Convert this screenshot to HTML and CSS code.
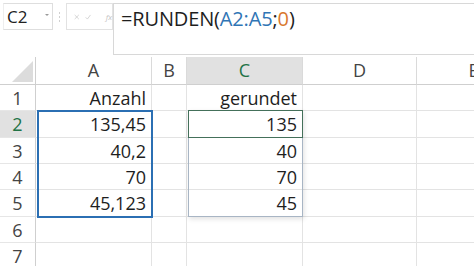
FILE: index.html
```html
<!DOCTYPE html>
<html lang="de">
<head>
<meta charset="utf-8">
<title>RUNDEN</title>
<link rel="stylesheet" href="styles.css">
</head>
<body>
<div class="sheet">
  <div class="bar">
    <div class="namebox"><span class="name">C2</span><span class="caret"></span></div>
    <div class="grip"><i></i><i></i><i></i></div>
    <div class="fbtns">
      <svg width="8" height="8" viewBox="0 0 8 8"><path d="M1 1L7 7M7 1L1 7" stroke="#c8c8c8" stroke-width="1.1" fill="none"/></svg>
      <svg width="9" height="8" viewBox="0 0 9 8"><path d="M1 4.5L3.5 7L8 1" stroke="#c8c8c8" stroke-width="1.1" fill="none"/></svg>
      <span class="fx">fx</span>
    </div>
    <div class="formula">=RUNDEN(<span class="ref">A2:A5</span>;<span class="num">0</span>)</div>
  </div>
  <div class="grid">
    <div class="corner"><span class="tri"></span></div>
    <div class="colh">A</div>
    <div class="colh">B</div>
    <div class="colh sel">C</div>
    <div class="colh">D</div>
    <div class="colh">E</div>

    <div class="rowh">1</div>
    <div class="cell">Anzahl</div><div class="cell"></div><div class="cell">gerundet</div><div class="cell"></div><div class="cell"></div>

    <div class="rowh sel">2</div>
    <div class="cell">135,45</div><div class="cell"></div><div class="cell">135</div><div class="cell"></div><div class="cell"></div>

    <div class="rowh">3</div>
    <div class="cell">40,2</div><div class="cell"></div><div class="cell">40</div><div class="cell"></div><div class="cell"></div>

    <div class="rowh">4</div>
    <div class="cell">70</div><div class="cell"></div><div class="cell">70</div><div class="cell"></div><div class="cell"></div>

    <div class="rowh">5</div>
    <div class="cell">45,123</div><div class="cell"></div><div class="cell">45</div><div class="cell"></div><div class="cell"></div>

    <div class="rowh">6</div>
    <div class="cell"></div><div class="cell"></div><div class="cell"></div><div class="cell"></div><div class="cell"></div>

    <div class="rowh">7</div>
    <div class="cell"></div><div class="cell"></div><div class="cell"></div><div class="cell"></div><div class="cell"></div>

    <div class="range-a"></div>
    <div class="spill-c"></div>
    <div class="active"></div>
  </div>
</div>
</body>
</html>
```
FILE: styles.css
```css
* { box-sizing: border-box; }
html, body { margin: 0; padding: 0; background: #fff; }
body {
  width: 474px;
  height: 266px;
  overflow: hidden;
  font-family: "Open Sans", "Noto Sans", sans-serif;
  color: #222;
}
.sheet { width: 474px; overflow: hidden; }

.bar {
  display: flex;
  align-items: flex-start;
  height: 57px;
  padding-top: 3px;
}
.namebox {
  margin-left: 3px;
  width: 50px;
  height: 27px;
  border: 1px solid #dedede;
  border-left-color: #eee;
  display: flex;
  align-items: center;
  justify-content: space-between;
  padding: 0 3px 0 3px;
  font-size: 17px;
  color: #222;
}
.name { line-height: 25px; }
.caret {
  width: 0; height: 0;
  border-left: 2px solid transparent;
  border-right: 2px solid transparent;
  border-top: 2px solid #9a9a9a;
  margin-bottom: 3px;
}
.grip {
  width: 13px;
  height: 27px;
  display: flex;
  flex-direction: column;
  align-items: center;
  justify-content: center;
  gap: 2px;
}
.grip i { display: block; width: 1px; height: 2px; background: #d0d0d0; }
.fbtns {
  width: 47px;
  height: 27px;
  border: 1px solid #e2e2e2;
  display: flex;
  align-items: center;
  gap: 6px;
  padding-left: 7px;
}
.fx { font-size: 8px; color: #c4c4c4; font-style: italic; margin-left: 8px; }
.formula {
  flex: 1;
  height: 52px;
  border: 1px solid #d8d8d8;
  border-right: none;
  padding: 3px 0 0 7px;
  font-size: 20px;
  line-height: 24px;
  letter-spacing: -0.15px;
  color: #1e1e1e;
  white-space: nowrap;
}
.ref { color: #2f75b5; }
.num { color: #d9782e; }

.grid {
  position: relative;
  display: grid;
  grid-template-columns: 36px 116px 35px 116px 114px 114px;
  grid-template-rows: 28px repeat(7, 26.34px);
  font-size: 18px;
}
.corner {
  position: relative;
  border-right: 1px solid #cfcfcf;
  border-bottom: 1px solid #cfcfcf;
}
.tri {
  position: absolute;
  right: 2px;
  bottom: 2px;
  width: 21px;
  height: 21px;
  background: #dcdcdc;
  clip-path: polygon(100% 0, 100% 100%, 0 100%);
}
.colh {
  text-align: center;
  line-height: 27px;
  color: #444;
  border-right: 1px solid #dadada;
  border-bottom: 1px solid #cfcfcf;
}
.colh.sel { background: #e1e1e1; color: #217346; }
.rowh {
  text-align: center;
  line-height: 26px;
  color: #444;
  border-right: 1px solid #cfcfcf;
  border-bottom: 1px solid #e6e6e6;
}
.rowh.sel { background: #e1e1e1; color: #217346; }
.cell {
  text-align: right;
  padding-right: 5px;
  line-height: 26px;
  white-space: nowrap;
  color: #1e1e1e;
  border-right: 1px solid #e3e3e3;
  border-bottom: 1px solid #e3e3e3;
}

.range-a {
  position: absolute;
  grid-column: 2 / 3;
  grid-row: 3 / 7;
  inset: -1px -1px -1px 1px;
  border: 2px solid #2b6fb3;
}
.spill-c {
  position: absolute;
  grid-column: 4 / 5;
  grid-row: 3 / 7;
  inset: -1px 0 0 1px;
  border: 1px solid #a8b5c4;
  box-shadow: 1px 2px 5px rgba(0, 0, 0, 0.12);
}
.active {
  position: absolute;
  grid-column: 4 / 5;
  grid-row: 3 / 4;
  inset: -1px 0 0 1px;
  border: 1px solid #44705a;
}
```
